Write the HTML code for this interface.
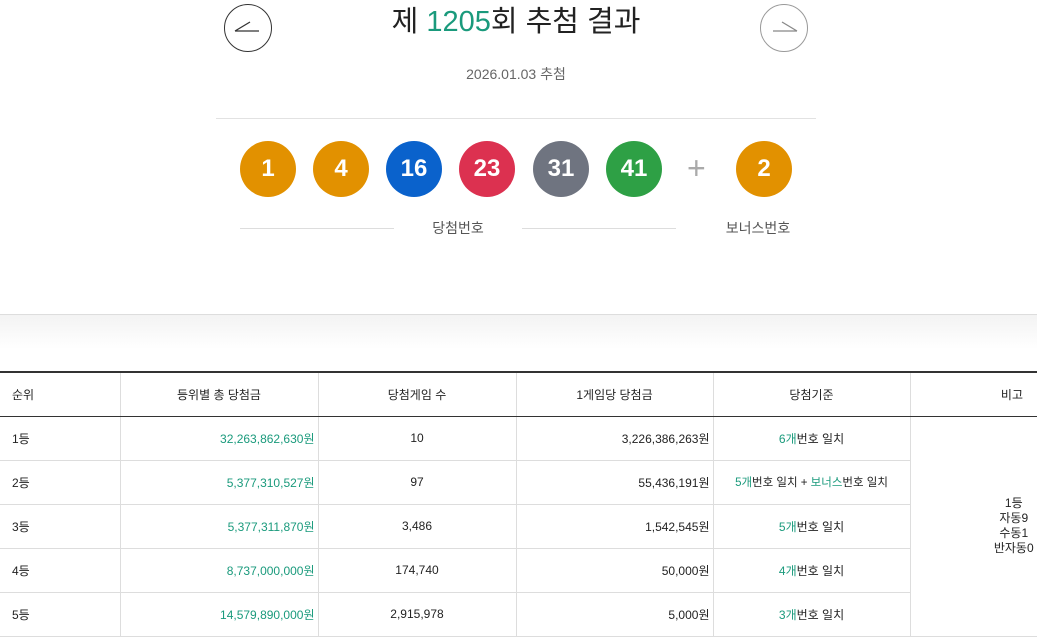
<!DOCTYPE html>
<html><head><meta charset="utf-8"><style>
*{margin:0;padding:0;box-sizing:border-box}
body{width:1037px;height:640px;overflow:hidden;background:#fff;font-family:"Liberation Sans","Noto Sans CJK KR",sans-serif;color:#222;position:relative}
.a{position:absolute}
.btn{position:absolute;top:4px;width:48px;height:48px;border-radius:50%;border:1px solid #333}
.ball{position:absolute;top:141px;width:56px;height:56px;border-radius:50%;color:#fff;font-weight:bold;font-size:24px;line-height:56px;text-align:center}
.o{background:#e29100}.b{background:#0a62cc}.r{background:#dc3150}.g{background:#6f7480}.gr{background:#2ea045}
table{position:absolute;top:371px;left:0;width:1037px;border-collapse:collapse;font-size:12px}
th{font-weight:normal;height:44px;border-top:2px solid #333;border-bottom:1px solid #333;border-left:1px solid #ddd;padding:0}
td{height:44px;border-bottom:1px solid #ddd;border-left:1px solid #ddd;text-align:center;padding:0}
th:first-child,td:first-child{border-left:none;text-align:left;padding-left:12px}
.rt{text-align:right;padding-right:3px}
.gn{color:#1a9a7c}
</style></head><body>
<div class="btn" style="left:224px"><svg width="48" height="48" class="a" style="left:-1px;top:-1px"><path d="M11 27 L35 27 M11 27 L26 18" stroke="#333" stroke-width="1.3" fill="none"/></svg></div>
<div class="btn" style="left:760px;border-color:#999"><svg width="48" height="48" class="a" style="left:-1px;top:-1px"><path d="M13 27 L37 27 M37 27 L22 18" stroke="#888" stroke-width="1.3" fill="none"/></svg></div>
<div class="a" style="left:0;width:1032px;top:2px;text-align:center;font-size:29px;font-weight:normal;line-height:40px">제 <span style="color:#1a9a7c">1205</span>회 추첨 결과</div>
<div class="a" style="left:0;width:1032px;top:64px;text-align:center;font-size:14px;color:#666">2026.01.03 추첨</div>
<div class="a" style="left:216px;top:118px;width:600px;height:1px;background:#e2e2e2"></div>
<div class="ball o" style="left:240px">1</div>
<div class="ball o" style="left:313px">4</div>
<div class="ball b" style="left:386px">16</div>
<div class="ball r" style="left:459px">23</div>
<div class="ball g" style="left:533px">31</div>
<div class="ball gr" style="left:606px">41</div>
<div class="a" style="left:687px;top:150px;font-size:32px;color:#aaa;line-height:36px">+</div>
<div class="ball o" style="left:736px">2</div>
<div class="a" style="left:240px;top:228px;width:154px;height:1px;background:#ddd"></div>
<div class="a" style="left:522px;top:228px;width:154px;height:1px;background:#ddd"></div>
<div class="a" style="left:394px;width:128px;top:218px;text-align:center;font-size:14px;color:#555">당첨번호</div>
<div class="a" style="left:708px;width:100px;top:218px;text-align:center;font-size:14px;color:#555">보너스번호</div>
<div class="a" style="left:0;top:314px;width:1037px;height:58px;border-top:1px solid #ddd;background:linear-gradient(#f3f3f3,#fff 60%)"></div>
<table>
<tr><th>순위</th><th style="width:198px">등위별 총 당첨금</th><th style="width:198px">당첨게임 수</th><th style="width:197px">1게임당 당첨금</th><th style="width:197px">당첨기준</th><th style="width:127px;text-align:right;padding-right:14px">비고</th></tr>
<tr><td>1등</td><td class="rt gn">32,263,862,630원</td><td>10</td><td class="rt">3,226,386,263원</td><td><span class="gn">6개</span>번호 일치</td><td rowspan="5" style="line-height:15px;padding-left:80px">1등<br>자동9<br>수동1<br>반자동0</td></tr>
<tr><td>2등</td><td class="rt gn">5,377,310,527원</td><td>97</td><td class="rt">55,436,191원</td><td style="font-size:11.5px"><span class="gn">5개</span>번호 일치 + <span class="gn">보너스</span>번호 일치</td></tr>
<tr><td>3등</td><td class="rt gn">5,377,311,870원</td><td>3,486</td><td class="rt">1,542,545원</td><td><span class="gn">5개</span>번호 일치</td></tr>
<tr><td>4등</td><td class="rt gn">8,737,000,000원</td><td>174,740</td><td class="rt">50,000원</td><td><span class="gn">4개</span>번호 일치</td></tr>
<tr><td>5등</td><td class="rt gn">14,579,890,000원</td><td>2,915,978</td><td class="rt">5,000원</td><td><span class="gn">3개</span>번호 일치</td></tr>
</table>
</body></html>
